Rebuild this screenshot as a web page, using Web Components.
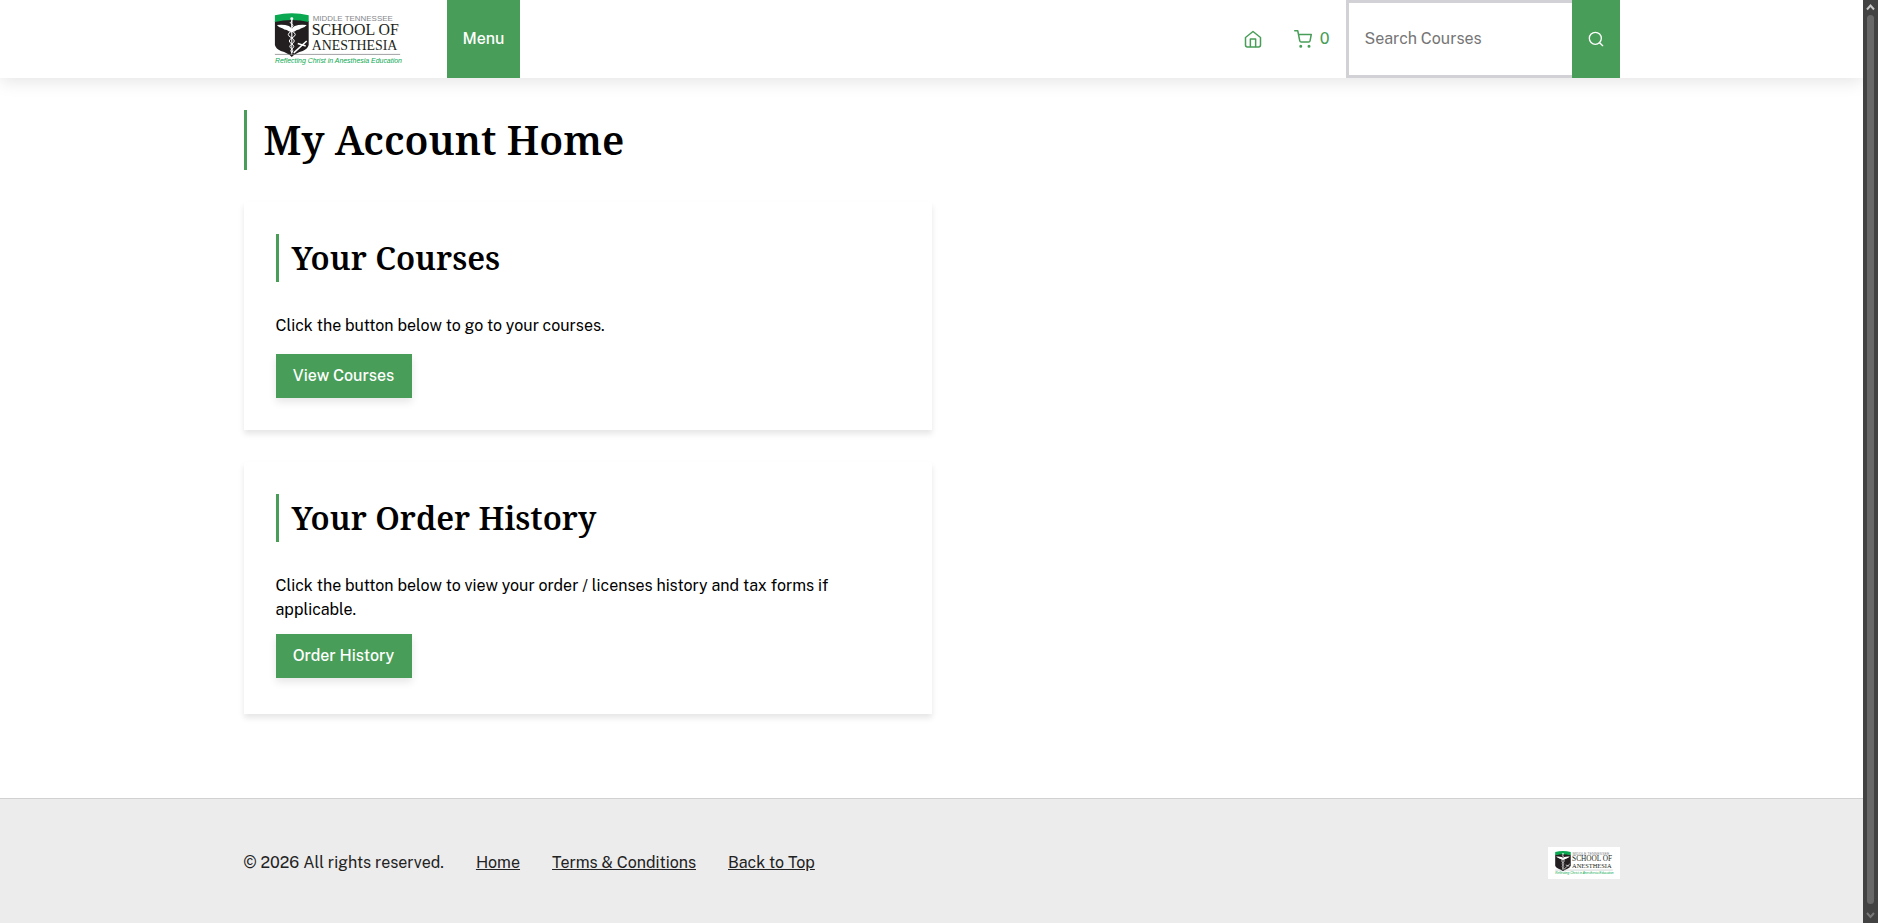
<!DOCTYPE html>
<html lang="en">
<head>
<meta charset="utf-8">
<meta name="viewport" content="width=device-width, initial-scale=1">
<title>My Account Home</title>
<style>
  :root {
    --brand: #489d58;
    --brand-logo: #0aa850;
    --heading-font: "Noto Serif", "DejaVu Serif", serif;
  }

  body {
    margin: 0;
    color: #000;
    background: #fff;
    font: 16px/24px "Public Sans", Inter, sans-serif;
  }
</style>
</head>
<body>

<app-shell>
  <site-header slot="header" count="0"></site-header>

  <page-title>My Account Home</page-title>
  <account-card heading="Your Courses" action="View Courses">
    Click the button below to go to your courses.
  </account-card>
  <account-card heading="Your Order History" action="Order History" compact>
    Click the button below to view your order / licenses history and tax forms if applicable.
  </account-card>

  <site-footer slot="footer">
    <footer-link href="#home">Home</footer-link>
    <footer-link href="#terms">Terms &amp; Conditions</footer-link>
    <footer-link href="#top">Back to Top</footer-link>
  </site-footer>
</app-shell>

<script>
class SchoolLogo extends HTMLElement {
    constructor(){
        super();
        this.attachShadow({mode: 'open'});
    }

    connectedCallback(){
        this.shadowRoot.innerHTML = `
        <style>
        :host {
            display: block;
            background: #fff;
        }

        svg {
            display: block;
            width: 100%;
            height: 100%;
        }

        .serif {
            font-family: "Liberation Serif", serif;
            fill: #231f20;
        }

        .top {
            font: 8px "Liberation Sans", sans-serif;
            fill: #85878a;
        }

        .tagline {
            font: italic 7px "Liberation Sans", sans-serif;
            fill: var(--brand-logo);
        }
        </style>

        <svg viewBox="0 0 156 70" role="img" aria-label="Middle Tennessee School of Anesthesia">
            <path fill="#231f20" d="M15 17 Q32 13 49 17 V41 Q48 45 43 47 Q36 49 32 53 Q28 49 21 47 Q16 45 15 41 Z"/>
            <path fill="var(--brand-logo)" d="M15 11 Q32 7 49 11 V18 Q32 14 15 18 Z"/>
            <g fill="#fff">
                <path d="M17 21 Q24 20 29 22 Q31 23 32 25 Q33 23 35 22 Q40 20 47 21 Q45 24 41 24.500 Q40 26 37 26 Q35 28 32 28 Q29 28 27 26 Q24 26 23 24.500 Q19 24 17 21 Z"/>
                <circle cx="32" cy="14.500" r="1.500"/>
                <path d="M31.300 15 H32.700 L32.400 51 H31.600 Z"/>
            </g>
            <g fill="none" stroke="#fff" stroke-width="1">
                <path d="M32 17 q-3 1.500 0 3 q3 1.500 0 3 M32 27 q-7 3.500 0 7 q5 3 0 6 q-4 2.500 0 5 q2 1.500 0 4"/>
                <path d="M32 27 q7 3.500 0 7 q-5 3 0 6 q4 2.500 0 5 q-2 1.500 0 4"/>
            </g>
            <path fill="none" stroke="#fff" stroke-width="1.500" d="M34 49 L47 37 M38 39.500 L46 42"/>
            <path stroke="#77787b" stroke-width=".7" d="M15 50.500 H141"/>
            <text class="top" x="53" y="17">MIDDLE TENNESSEE</text>
            <text class="serif" font-size="16" x="52" y="31">SCHOOL OF</text>
            <text class="serif" font-size="14" x="52" y="46">ANESTHESIA</text>
            <text class="tagline" x="15" y="59">Reflecting Christ in Anesthesia Education</text>
        </svg>
        `;
    }
}

class SiteSearch extends HTMLElement {
    constructor(){
        super();
        this.attachShadow({mode: 'open'});
    }

    get value(){
        return this.shadowRoot.querySelector('#searchInput').value;
    }

    connectedCallback(){
        this.shadowRoot.innerHTML = `
        <style>
        :host {
            display: block;
        }

        form {
            display: flex;
            height: 100%;
        }

        label {
            display: flex;
        }

        input {
            box-sizing: border-box;
            width: 226px;
            padding: 0 16px;
            border: 3px solid #d1d1d6;
            border-right: 0;
            border-radius: 0;
            background: #fff;
            color: #222;
            font: inherit;
        }

        input::placeholder {
            color: #757575;
            opacity: 1;
        }

        button {
            display: grid;
            place-items: center;
            width: 48px;
            padding: 0;
            border: 0;
            background: var(--brand);
            color: #fff;
            cursor: pointer;
        }
        </style>

        <form role="search">
            <label for="searchInput">
                <input id="searchInput" type="text" placeholder="Search Courses" aria-label="Search Courses">
            </label>
            <button type="submit" aria-label="Search">
                <svg width="16" height="16" viewBox="0 0 24 24" fill="none" stroke="currentColor" stroke-width="2" stroke-linecap="round" stroke-linejoin="round">
                    <circle cx="11" cy="11" r="9"/>
                    <path d="M22 22 L17.500 17.500"/>
                </svg>
            </button>
        </form>
        `;

        this.shadowRoot.querySelector('form').addEventListener('submit', event => event.preventDefault());
    }
}

class SiteHeader extends HTMLElement {
    constructor(){
        super();
        this.attachShadow({mode: 'open'});
    }

    connectedCallback(){
        this.shadowRoot.innerHTML = `
        <style>
        :host {
            display: block;
            background: #fff;
            box-shadow: 0 4px 16px rgba(0, 0, 0, .1);
        }

        header {
            display: flex;
            align-items: stretch;
            box-sizing: border-box;
            max-width: 1440px;
            height: 78px;
            margin: 0 auto;
            padding: 0 32px;
        }

        .brand {
            display: flex;
            align-items: center;
            padding: 0 32px 0 16px;
        }

        school-logo {
            width: 155px;
            height: 70px;
        }

        .menu {
            padding: 0 16px;
            border: 0;
            background: var(--brand);
            color: #fff;
            font: inherit;
            font-weight: 500;
            cursor: pointer;
        }

        nav {
            display: flex;
            margin-left: auto;
        }

        nav a {
            display: flex;
            align-items: center;
            gap: 8px;
            padding: 0 16px;
            color: var(--brand);
            text-decoration: none;
        }

        nav svg {
            display: block;
            fill: none;
            stroke: currentColor;
            stroke-width: 2;
            stroke-linecap: round;
            stroke-linejoin: round;
        }
        </style>

        <header>
            <a class="brand" href="#home" aria-label="Home"><school-logo></school-logo></a>
            <button class="menu" type="button">Menu</button>
            <nav aria-label="Account">
                <a href="#home" aria-label="Home">
                    <svg width="18" height="18" viewBox="0 0 24 24">
                        <path d="M2 10 L12 2 L22 10 V20 a2.500 2.500 0 0 1 -2.500 2.500 H4.500 A2.500 2.500 0 0 1 2 20 Z"/>
                        <path d="M8.500 22 V12 H15.500 V22"/>
                    </svg>
                </a>
                <a href="#cart" aria-label="Cart">
                    <svg width="18" height="18" viewBox="0 0 24 24">
                        <circle cx="9" cy="21.500" r="1"/>
                        <circle cx="20" cy="21.500" r="1"/>
                        <path d="M1 1 H5 L7.700 14.400 A2 2 0 0 0 9.700 16 H19.400 A2 2 0 0 0 21.400 14.400 L23 6 H6"/>
                    </svg>
                    <span>${this.getAttribute('count')}</span>
                </a>
            </nav>
            <site-search></site-search>
        </header>
        `;
    }
}

class PageTitle extends HTMLElement {
    constructor(){
        super();
        this.attachShadow({mode: 'open'}).innerHTML = `
        <style>
        :host {
            display: block;
        }

        h1 {
            margin: 0;
            padding-left: 17px;
            border-left: 3px solid var(--brand);
            font: 600 40px/60px var(--heading-font);
        }
        </style>

        <h1><slot></slot></h1>
        `;
    }
}

class AccountCard extends HTMLElement {
    constructor(){
        super();
        this.attachShadow({mode: 'open'});
    }

    connectedCallback(){
        this.shadowRoot.innerHTML = `
        <style>
        :host {
            display: block;
            box-sizing: border-box;
            width: 50%;
            padding: 32px;
            background: #fff;
            box-shadow: 0 4px 6px rgba(0, 0, 0, .1);
        }

        :host([compact]) {
            padding-bottom: 36px;
        }

        h2 {
            margin: 0 0 32px;
            padding-left: 13px;
            border-left: 3px solid var(--brand);
            font: 600 32px/48px var(--heading-font);
        }

        p {
            margin: 0 0 16px;
        }

        :host([compact]) p {
            margin-bottom: 12px;
        }

        button {
            display: block;
            min-width: 136px;
            height: 44px;
            padding: 0 16px;
            border: 0;
            background: var(--brand);
            box-shadow: 0 4px 8px rgba(0, 0, 0, .1);
            color: #fff;
            font: inherit;
            font-weight: 500;
            cursor: pointer;
        }

        @media screen and (max-width: 800px){
            :host {
                width: 100%;
            }
        }
        </style>

        <h2>${this.getAttribute('heading')}</h2>
        <p><slot></slot></p>
        <button type="button">${this.getAttribute('action')}</button>
        `;
    }
}

class FooterLink extends HTMLElement {
    constructor(){
        super();
        this.attachShadow({mode: 'open'});
    }

    connectedCallback(){
        this.shadowRoot.innerHTML = `
        <style>
        :host {
            display: block;
        }

        a {
            color: inherit;
            text-decoration: underline;
        }
        </style>

        <a href="${this.getAttribute('href')}"><slot></slot></a>
        `;
    }
}

class SiteFooter extends HTMLElement {
    constructor(){
        super();
        this.attachShadow({mode: 'open'}).innerHTML = `
        <style>
        :host {
            display: block;
            border-top: 1px solid #d1d1d1;
            background: #ececec;
            color: #222;
        }

        footer {
            display: flex;
            align-items: center;
            flex-wrap: wrap;
            gap: 32px;
            box-sizing: border-box;
            max-width: 1440px;
            margin: 0 auto;
            padding: 48px 32px;
        }

        school-logo {
            width: 72px;
            height: 32px;
            margin-left: auto;
        }
        </style>

        <footer>
            <span>© 2026 All rights reserved.</span>
            <slot></slot>
            <school-logo></school-logo>
        </footer>
        `;
    }
}

class ScrollRail extends HTMLElement {
    constructor(){
        super();
        this.attachShadow({mode: 'open'}).innerHTML = `
        <style>
        :host {
            display: flex;
            flex-direction: column;
            align-items: center;
            gap: 2px;
            box-sizing: border-box;
            padding: 3px 0;
            background: #424242;
        }

        .thumb {
            flex: 1;
            width: 7px;
            border-radius: 4px;
            background: #686868;
        }

        svg {
            display: block;
            fill: none;
            stroke-width: 2;
        }
        </style>

        <svg width="9" height="10" viewBox="0 0 9 10" stroke="#c8c8c8"><path d="M1 6.500 L4.500 2.500 L8 6.500"/></svg>
        <div class="thumb"></div>
        <svg width="9" height="14" viewBox="0 0 9 14" stroke="#777"><path d="M1 7 L4.500 11 L8 7"/></svg>
        `;
    }
}

class AppShell extends HTMLElement {
    constructor(){
        super();
        this.attachShadow({mode: 'open'}).innerHTML = `
        <style>
        :host {
            display: grid;
            grid-template-columns: minmax(0, 1fr) 15px;
            height: 100vh;
        }

        .page {
            display: flex;
            flex-direction: column;
            overflow: auto;
            scrollbar-width: none;
        }

        main {
            display: flex;
            flex: 1 0 auto;
            flex-direction: column;
            gap: 32px;
            box-sizing: border-box;
            width: 100%;
            max-width: 1440px;
            margin: 0 auto;
            padding: 32px 32px 84px;
        }

        ::slotted([slot="header"]) {
            position: relative;
            flex: none;
        }

        ::slotted([slot="footer"]) {
            flex: none;
        }
        </style>

        <div class="page">
            <slot name="header"></slot>
            <main><slot></slot></main>
            <slot name="footer"></slot>
        </div>
        <scroll-rail aria-hidden="true"></scroll-rail>
        `;
    }
}

customElements.define('school-logo', SchoolLogo);
customElements.define('site-search', SiteSearch);
customElements.define('site-header', SiteHeader);
customElements.define('page-title', PageTitle);
customElements.define('account-card', AccountCard);
customElements.define('footer-link', FooterLink);
customElements.define('site-footer', SiteFooter);
customElements.define('scroll-rail', ScrollRail);
customElements.define('app-shell', AppShell);
</script>
</body>
</html>
